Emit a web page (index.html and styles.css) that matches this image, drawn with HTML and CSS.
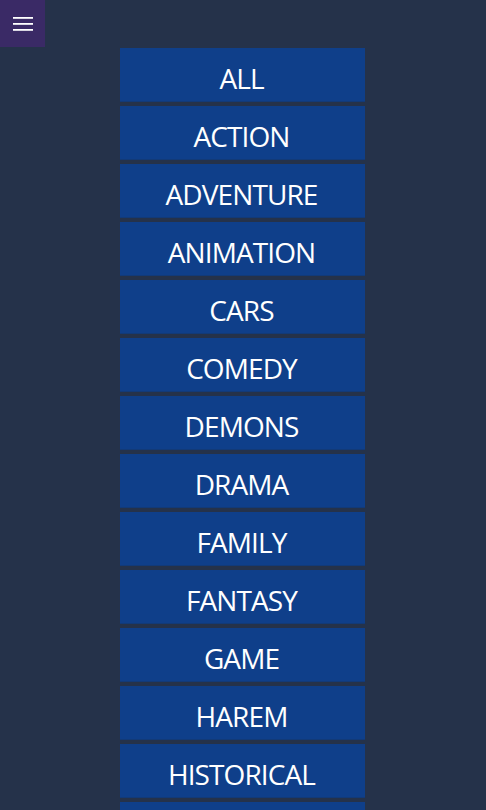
FILE: index.html
```html
<!DOCTYPE html>
<html>
<head>
<meta charset="utf-8">
<link rel="stylesheet" href="styles.css">
</head>
<body>
<header class="topbar">
  <button class="menu-btn" aria-label="Menu">
    <svg width="20" height="14" viewBox="0 0 20 14"><rect x="0" y="0" width="20" height="1.8" fill="#fff"/><rect x="0" y="6" width="20" height="1.8" fill="#fff"/><rect x="0" y="12" width="20" height="1.8" fill="#fff"/></svg>
  </button>
</header>
<main class="genres">
  <div class="genre">ALL</div>
  <div class="genre">ACTION</div>
  <div class="genre">ADVENTURE</div>
  <div class="genre">ANIMATION</div>
  <div class="genre">CARS</div>
  <div class="genre">COMEDY</div>
  <div class="genre">DEMONS</div>
  <div class="genre">DRAMA</div>
  <div class="genre">FAMILY</div>
  <div class="genre">FANTASY</div>
  <div class="genre">GAME</div>
  <div class="genre">HAREM</div>
  <div class="genre">HISTORICAL</div>
  <div class="genre"></div>
</main>
</body>
</html>
```
FILE: styles.css
```css
html, body {
  margin: 0;
  padding: 0;
  background: #25324a;
  height: 810px;
  overflow: hidden;
}
body {
  font-family: "Open Sans", "Noto Sans", sans-serif;
}
.topbar {
  height: 48px;
}
.menu-btn {
  width: 45px;
  height: 47px;
  border: 0;
  padding: 0;
  margin: 0;
  background: #3a2a66;
  display: flex;
  align-items: center;
  justify-content: center;
}
.genres {
  display: flex;
  flex-direction: column;
  gap: 4px;
  padding-left: 120px;
}
.genre {
  width: 245px;
  height: 54px;
  box-sizing: border-box;
  background: #0f3f8a;
  border-bottom: 1px solid #123a78;
  color: #fff;
  font-size: 28px;
  letter-spacing: -0.9px;
  display: flex;
  align-items: center;
  justify-content: center;
  padding-top: 6px;
  padding-right: 2px;
}
```
